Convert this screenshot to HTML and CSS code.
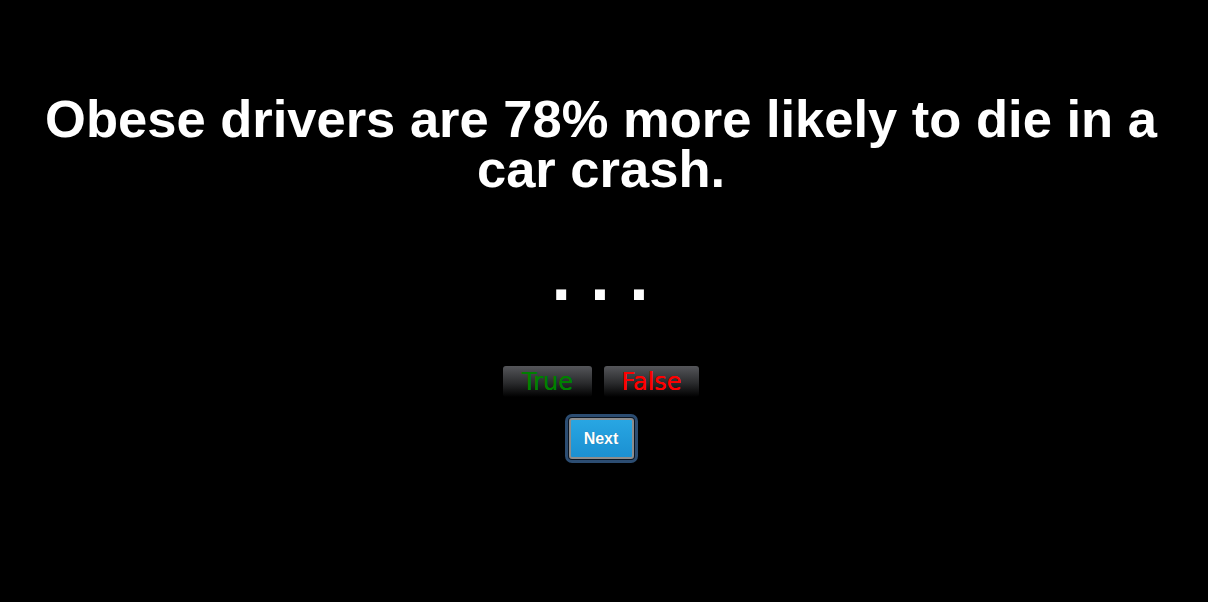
FILE: index.html
```html
<!DOCTYPE html>
<html>
<head>
<meta charset="utf-8">
<link rel="stylesheet" href="styles.css">
</head>
<body>
<main class="quiz">
  <h1 class="question">Obese drivers are 78% more likely to die in a car crash.</h1>
  <div class="dots">. . .</div>
  <div class="answers">
    <button class="answer answer-true">True</button>
    <button class="answer answer-false">False</button>
  </div>
  <button class="next">Next</button>
</main>
</body>
</html>
```
FILE: styles.css
```css
html, body {
  margin: 0;
  padding: 0;
  background: #000;
}
body {
  width: 1208px;
  height: 602px;
  overflow: hidden;
}
.quiz {
  display: flex;
  flex-direction: column;
  align-items: center;
  padding: 94px 36px 0 30px;
}
.question {
  margin: 0;
  color: #fff;
  font-family: "Liberation Sans", Arial, sans-serif;
  font-weight: bold;
  font-size: 52.5px;
  line-height: 50px;
  text-align: center;
}
.dots {
  margin-top: 47px;
  margin-left: -2px;
  color: #fff;
  font-family: "Liberation Sans", Arial, sans-serif;
  font-weight: bold;
  font-size: 70px;
  line-height: 70px;
  height: 70px;
}
.answers {
  margin-top: 55px;
  display: flex;
  gap: 12px;
}
.answer {
  height: 31px;
  padding: 2px 0 0;
  border: none;
  border-radius: 3px;
  background: linear-gradient(#55565a, #2a2b2d 55%, #000);
  font-family: "DejaVu Sans", sans-serif;
  font-size: 24px;
  line-height: 29px;
  text-align: center;
  cursor: pointer;
}
.answer-true { width: 89px; color: #008000; text-shadow: 0 0 0.5px #008000; }
.answer-false { width: 95px; color: #ff0000; text-shadow: 0 0 0.5px #ff0000; }
.next {
  margin-top: 21px;
  width: 65px;
  height: 41px;
  box-sizing: border-box;
  border: 2px solid #8d8d8d;
  border-radius: 3px;
  background: linear-gradient(#28a6e3, #1b90d1);
  box-shadow: 0 0 0 1px #0a1522, 0 0 0 4px #2c4d72;
  color: #fff;
  font-family: "Liberation Sans", Arial, sans-serif;
  font-weight: bold;
  font-size: 16px;
  padding: 0;
  cursor: pointer;
  text-shadow: 0 0 1px rgba(0,0,0,0.3);
}
```
